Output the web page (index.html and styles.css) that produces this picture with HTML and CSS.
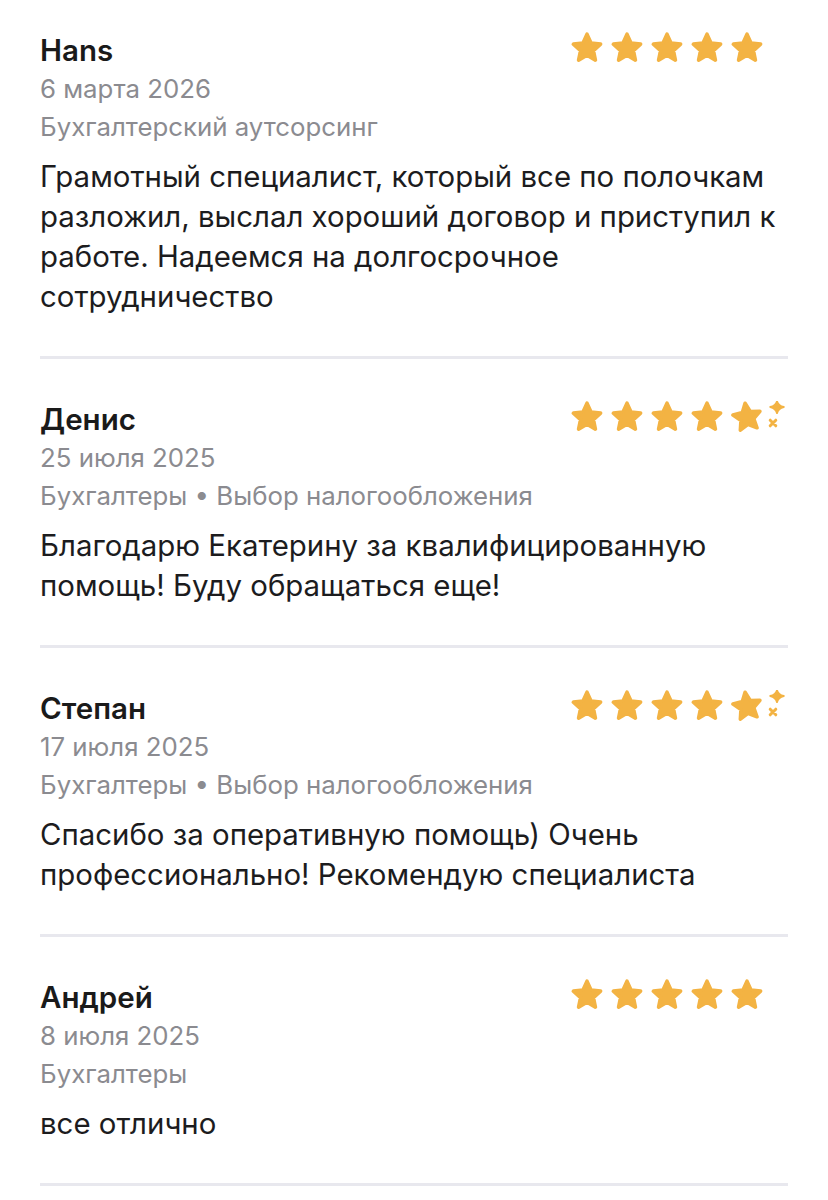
FILE: index.html
```html
<!DOCTYPE html>
<html lang="ru">
<head>
<meta charset="utf-8">
<title>Отзывы</title>
<link rel="stylesheet" href="styles.css">
</head>
<body>
<svg width="0" height="0" class="defs" aria-hidden="true">
  <defs>
    <symbol id="star" viewBox="0 0 32 31">
      <polygon points="16,2.2 20,11 29.6,12.1 22.47,18.6 24.4,28.1 16,23.3 7.6,28.1 9.53,18.6 2.4,12.1 12,11" fill="#F3B343" stroke="#F3B343" stroke-width="3.6" stroke-linejoin="round"/>
    </symbol>
    <symbol id="star-sparkle" viewBox="0 0 54 31">
      <g transform="rotate(-8 16 16)">
        <polygon points="16,2.2 20,11 29.6,12.1 22.47,18.6 24.4,28.1 16,23.3 7.6,28.1 9.53,18.6 2.4,12.1 12,11" fill="#F3B343" stroke="#F3B343" stroke-width="3.6" stroke-linejoin="round"/>
      </g>
      <path d="M46 0.2 Q47.2 4.8 52.8 6 Q47.2 7.2 46 12.2 Q44.8 7.2 39.2 6 Q44.8 4.8 46 0.2Z" fill="#F3B343" stroke="#F3B343" stroke-width="1.8" stroke-linejoin="round"/>
      <path d="M39.2 19.2 L44.8 24.8 M44.8 19.2 L39.2 24.8" stroke="#F3B343" stroke-width="3" stroke-linecap="round"/>
    </symbol>
  </defs>
</svg>

<main class="reviews">
  <article class="review">
    <header class="review-head">
      <div class="meta">
        <div class="name">Hans</div>
        <div class="date">6 марта 2026</div>
        <div class="category">Бухгалтерский аутсорсинг</div>
      </div>
      <div class="stars" aria-label="5 из 5">
        <svg class="star"><use href="#star"/></svg>
        <svg class="star"><use href="#star"/></svg>
        <svg class="star"><use href="#star"/></svg>
        <svg class="star"><use href="#star"/></svg>
        <svg class="star"><use href="#star"/></svg>
      </div>
    </header>
    <p class="text">Грамотный специалист, который все по полочкам разложил, выслал хороший договор и приступил к работе. Надеемся на долгосрочное сотрудничество</p>
  </article>

  <article class="review">
    <header class="review-head">
      <div class="meta">
        <div class="name">Денис</div>
        <div class="date">25 июля 2025</div>
        <div class="category">Бухгалтеры • Выбор налогообложения</div>
      </div>
      <div class="stars" aria-label="4.5 из 5">
        <svg class="star"><use href="#star"/></svg>
        <svg class="star"><use href="#star"/></svg>
        <svg class="star"><use href="#star"/></svg>
        <svg class="star"><use href="#star"/></svg>
        <svg class="star star-wide"><use href="#star-sparkle"/></svg>
      </div>
    </header>
    <p class="text">Благодарю Екатерину за квалифицированную помощь! Буду обращаться еще!</p>
  </article>

  <article class="review">
    <header class="review-head">
      <div class="meta">
        <div class="name">Степан</div>
        <div class="date">17 июля 2025</div>
        <div class="category">Бухгалтеры • Выбор налогообложения</div>
      </div>
      <div class="stars" aria-label="4.5 из 5">
        <svg class="star"><use href="#star"/></svg>
        <svg class="star"><use href="#star"/></svg>
        <svg class="star"><use href="#star"/></svg>
        <svg class="star"><use href="#star"/></svg>
        <svg class="star star-wide"><use href="#star-sparkle"/></svg>
      </div>
    </header>
    <p class="text">Спасибо за оперативную помощь) Очень профессионально! Рекомендую специалиста</p>
  </article>

  <article class="review">
    <header class="review-head">
      <div class="meta">
        <div class="name">Андрей</div>
        <div class="date">8 июля 2025</div>
        <div class="category">Бухгалтеры</div>
      </div>
      <div class="stars" aria-label="5 из 5">
        <svg class="star"><use href="#star"/></svg>
        <svg class="star"><use href="#star"/></svg>
        <svg class="star"><use href="#star"/></svg>
        <svg class="star"><use href="#star"/></svg>
        <svg class="star"><use href="#star"/></svg>
      </div>
    </header>
    <p class="text">все отлично</p>
  </article>
</main>
</body>
</html>
```

FILE: styles.css
```css
html, body {
  margin: 0;
  padding: 0;
  background: #ffffff;
}

body {
  font-family: Inter, "Noto Sans", "Liberation Sans", sans-serif;
  color: #1c1c1e;
}

.defs {
  position: absolute;
  width: 0;
  height: 0;
  overflow: hidden;
}

.reviews {
  padding: 31px 40px 0;
}

.review {
  border-bottom: 3px solid #e8e8ee;
  padding-bottom: 39px;
  margin-bottom: 41px;
}

.review-head {
  display: flex;
  justify-content: space-between;
  align-items: flex-start;
}

.meta {
  min-width: 0;
}

.name {
  font-size: 29.5px;
  font-weight: 600;
  line-height: 38px;
  color: #1a1a1a;
}

.date {
  font-size: 25.8px;
  line-height: 39px;
  color: #8b8b90;
}

.category {
  font-size: 25.8px;
  line-height: 38px;
  color: #8b8b90;
}

.stars {
  display: flex;
  gap: 8px;
  width: 217px;
  flex: none;
  margin-top: 1px;
}

.star {
  width: 32px;
  height: 31px;
  flex: none;
}

.star-wide {
  width: 54px;
}

.text {
  margin: 11px 0 0;
  font-size: 29.4px;
  line-height: 40px;
  color: #1c1c1e;
}
```
